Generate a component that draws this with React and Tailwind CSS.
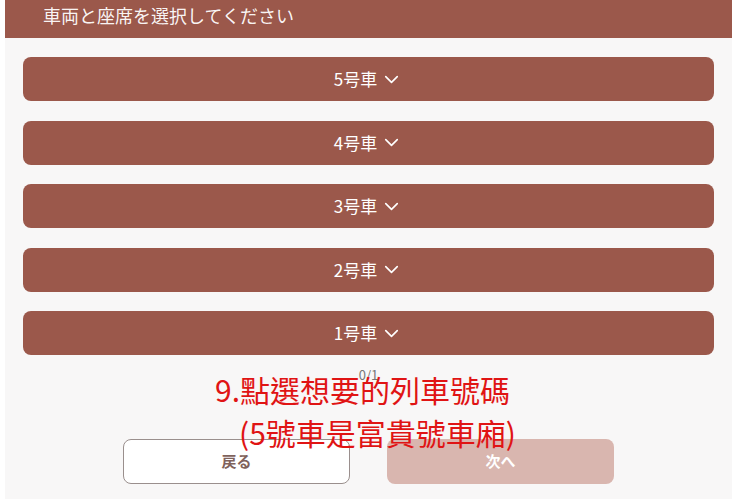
import React from 'react';
import { ChevronDown } from 'lucide-react';

const cars = ['5', '4', '3', '2', '1'];

const App = () => {
  return (
    <div
      className="relative w-full h-[499px] bg-white overflow-hidden"
      style={{ fontFamily: '"Noto Sans CJK JP", "Noto Sans", sans-serif' }}
    >
      <div className="ml-[5px] w-[727px] h-[499px] bg-[#f8f7f7] flex flex-col">
        {/* Header */}
        <div className="h-[38px] bg-[#9b584b] flex items-center pl-[38px] pb-[8px]">
          <span className="text-[18px] text-white/95">車両と座席を選択してください</span>
        </div>

        {/* Car list */}
        <div className="flex flex-col gap-[19.5px] px-[18px] pt-[19px]">
          {cars.map((n) => (
            <button
              key={n}
              className="h-[44px] w-full rounded-[8px] bg-[#9b584b] flex items-center justify-center gap-[3px] text-white text-[17px]"
            >
              <span>{n}号車</span>
              <ChevronDown size={23} strokeWidth={1.7} />
            </button>
          ))}
        </div>

        <div className="mt-[13px] text-center text-[13px] text-[#777] leading-none">0/1</div>

        {/* Footer buttons */}
        <div className="flex justify-center gap-[37px] mt-[58px]">
          <button className="w-[227px] h-[45px] rounded-[8px] border border-[#9a8f8d] bg-white text-[#7f625c] text-[15px] font-bold">
            戻る
          </button>
          <button className="w-[227px] h-[45px] rounded-[8px] bg-[#d9b6af] text-white text-[15px] font-bold">
            次へ
          </button>
        </div>
      </div>

      {/* Red annotation overlay */}
      <div
        className="absolute left-[215px] top-[369px] text-[30px] leading-[40px] text-[#e01414] whitespace-nowrap"
        style={{ fontFamily: '"Noto Sans CJK TC", sans-serif' }}
      >
        9.點選想要的列車號碼
      </div>
      <div
        className="absolute left-[239px] top-[412px] text-[30px] leading-[40px] text-[#e01414] whitespace-nowrap"
        style={{ fontFamily: '"Noto Sans CJK TC", sans-serif' }}
      >
        (5號車是富貴號車廂)
      </div>
    </div>
  );
};

export default App;
